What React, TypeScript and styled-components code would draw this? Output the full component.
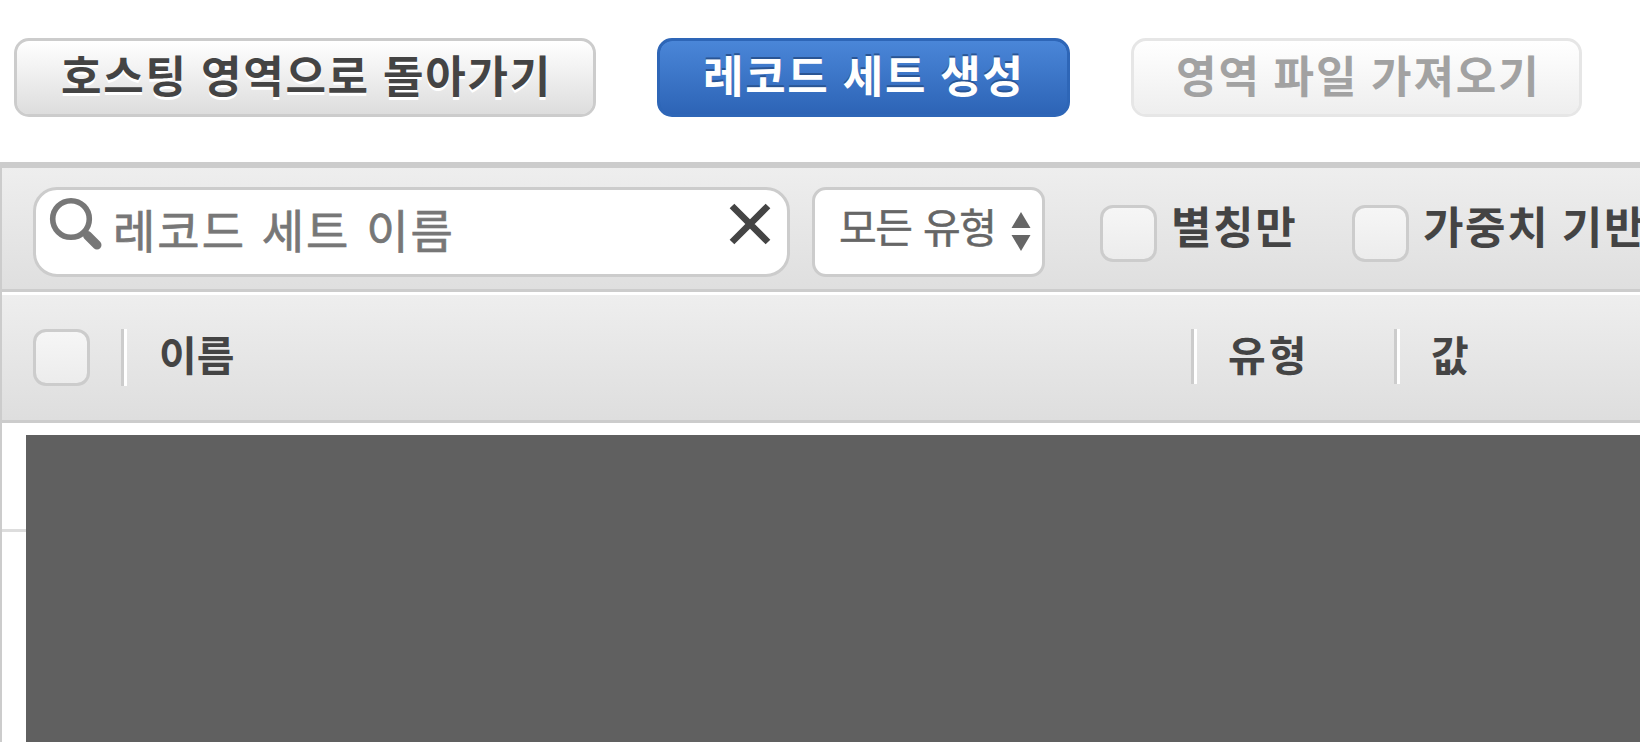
import React from 'react';
import styled, { createGlobalStyle, css } from 'styled-components';

const GlobalStyle = createGlobalStyle`
  * { box-sizing: border-box; }
  body {
    margin: 0;
    background: #fff;
    overflow: hidden;
    font-family: 'Noto Sans CJK KR', sans-serif;
  }
`;

const Page = styled.div`
  width: 1640px;
  height: 742px;
  display: flex;
  flex-direction: column;
  overflow: hidden;
`;

const Label = styled.span<{ $size: number; $spacing?: number; $gap?: number; $weight?: number }>`
  display: block;
  white-space: nowrap;
  line-height: 60px;
  font-size: ${p => p.$size}px;
  font-weight: ${p => p.$weight ?? 700};
  letter-spacing: ${p => p.$spacing ?? 0}px;
  word-spacing: ${p => p.$gap ?? 0}px;
`;

const Actions = styled.header`
  display: flex;
  flex: none;
  height: 162px;
  padding: 38px 0 0 14px;
`;

const variants = {
  plain: css`
    color: #444;
    border-color: #ccc;
    background: linear-gradient(#fff, #ddd) padding-box;
    text-shadow: 0 3px 0 #fff;
  `,
  primary: css`
    color: #fff;
    border-color: #2e66b7;
    background: linear-gradient(#4a86d8, #2d64b6) padding-box, #2e66b7;
    text-shadow: 0 -2px 0 #2a5594;
  `,
  disabled: css`
    color: #a2a2a2;
    border-color: #e6e6e6;
    background: linear-gradient(#fff, #eee) padding-box;
  `,
};

const Button = styled.button<{ $variant: keyof typeof variants; $width: number; $inset: number; $after: number }>`
  flex: none;
  width: ${p => p.$width}px;
  height: 79px;
  margin-right: ${p => p.$after}px;
  padding: 3px 0 0 ${p => p.$inset}px;
  display: flex;
  align-items: flex-start;
  font-family: inherit;
  border: 3px solid;
  border-radius: 15px;
  ${p => variants[p.$variant]}
`;

const Panel = styled.main`
  flex: 1;
  min-height: 0;
  display: flex;
  flex-direction: column;
  border-left: 2px solid #ccc;
  border-top: 6px solid #ccc;
`;

const FilterBar = styled.div`
  flex: none;
  display: flex;
  align-items: flex-start;
  height: 124px;
  padding: 19px 0 0 31px;
  background: linear-gradient(#eee, #dfdfdf);
  border-bottom: 3px solid #ccc;
`;

const Field = styled.div<{ $width: number; $radius: number; $inset: number }>`
  flex: none;
  display: flex;
  align-items: flex-start;
  width: ${p => p.$width}px;
  height: 90px;
  padding-left: ${p => p.$inset}px;
  background: #fff;
  border: 3px solid #ccc;
  border-radius: ${p => p.$radius}px;
`;

const SearchField = styled(Field)`
  margin-right: 22px;
  color: #777;
  & > span {
    flex: 1;
    padding-top: 8px;
    -webkit-text-stroke: 0.7px #777;
  }
`;

const TypeSelect = styled(Field)`
  margin-right: 55px;
  color: #666;
  & > span {
    width: 172px;
    padding-top: 5px;
    -webkit-text-stroke: 0.5px #666;
  }
`;

const SearchIcon = styled.svg`
  flex: none;
  width: 54px;
  height: 54px;
  margin: 6px 11px 0 0;
`;

const ClearIcon = styled.svg`
  flex: none;
  width: 44px;
  height: 44px;
  margin: 12px 15px 0 0;
`;

const ArrowsIcon = styled.svg`
  flex: none;
  width: 20px;
  height: 40px;
  margin-top: 21px;
`;

const Box = styled.span`
  flex: none;
  width: 57px;
  height: 57px;
  border: 3px solid #ccc;
  border-radius: 13px;
  background: linear-gradient(#f6f6f6, #ececec) padding-box;
`;

const Check = styled.label<{ $width: number }>`
  flex: none;
  display: flex;
  width: ${p => p.$width}px;
  padding-top: 18px;
  gap: 14px;
  color: #444;
  & > span:last-child { margin-top: -10px; }
`;

const TableHead = styled.div`
  flex: none;
  display: flex;
  height: 131px;
  padding: 34px 0 0 31px;
  color: #444;
  border-top: 3px solid #fff;
  border-bottom: 3px solid #ccc;
  background: linear-gradient(#eee, #dedede) padding-box;
`;

const Column = styled.div<{ $width: number; $inset: number; $rule?: number }>`
  flex: none;
  display: flex;
  width: ${p => p.$width}px;
  gap: ${p => p.$inset}px;
  &::before {
    content: '';
    flex: none;
    width: 6px;
    height: ${p => p.$rule ?? 55}px;
    background: linear-gradient(90deg, #ccc 50%, #fff 50%);
  }
  & > span { margin-top: -6px; }
`;

const HeadCheck = styled.div`
  flex: none;
  width: 88px;
`;

const HeadBox = styled(Box)`
  display: block;
`;

const Body = styled.div`
  flex: 1;
  min-height: 0;
  display: flex;
  padding-top: 12px;
`;

const Gutter = styled.div`
  width: 24px;
  height: 97px;
  border-bottom: 3px solid #ddd;
`;

const Mask = styled.div`
  flex: 1;
  background: #606060;
`;

export default function App() {
  return (
    <Page>
      <GlobalStyle />
      <Actions>
        <Button $variant="plain" $width={582} $inset={44} $after={61}>
          <Label $size={44} $spacing={1.75} $gap={1.5}>호스팅 영역으로 돌아가기</Label>
        </Button>
        <Button $variant="primary" $width={413} $inset={43} $after={61}>
          <Label $size={44} $spacing={1.7} $gap={1.5}>레코드 세트 생성</Label>
        </Button>
        <Button $variant="disabled" $width={451} $inset={42} $after={0} disabled>
          <Label $size={44} $spacing={2} $gap={0.5}>영역 파일 가져오기</Label>
        </Button>
      </Actions>
      <Panel>
        <FilterBar>
          <SearchField $width={757} $radius={24} $inset={12}>
            <SearchIcon viewBox="0 0 54 54" fill="none" stroke="#777">
              <circle cx="23" cy="23" r="18.3" strokeWidth="5.6" />
              <path d="M36 36l3 3" strokeWidth="5.5" />
              <path d="M39.5 39.5l9.5 9.5" strokeWidth="9" strokeLinecap="round" />
            </SearchIcon>
            <Label $size={46} $spacing={2} $gap={3.5} $weight={400}>레코드 세트 이름</Label>
            <ClearIcon viewBox="0 0 44 44" fill="none" stroke="#444" strokeWidth="6.6">
              <path d="M4 4l36 36M40 4l-36 36" />
            </ClearIcon>
          </SearchField>
          <TypeSelect $width={233} $radius={14} $inset={24}>
            <Label $size={41} $spacing={-1.4} $gap={3.5} $weight={400}>모든 유형</Label>
            <ArrowsIcon viewBox="0 0 20 40" fill="#666">
              <path d="M10 1l9.5 16H.5zM.5 24h19L10 40z" />
            </ArrowsIcon>
          </TypeSelect>
          <Check $width={252}>
            <Box />
            <Label $size={44} $spacing={1.6}>별칭만</Label>
          </Check>
          <Check $width={500}>
            <Box />
            <Label $size={44} $spacing={1.6} $gap={1}>가중치 기반</Label>
          </Check>
        </FilterBar>
        <TableHead>
          <HeadCheck><HeadBox /></HeadCheck>
          <Column $width={1070} $inset={32} $rule={57}>
            <Label $size={41}>이름</Label>
          </Column>
          <Column $width={203} $inset={31}>
            <Label $size={41} $spacing={3}>유형</Label>
          </Column>
          <Column $width={240} $inset={31}>
            <Label $size={41}>값</Label>
          </Column>
        </TableHead>
        <Body>
          <Gutter />
          <Mask />
        </Body>
      </Panel>
    </Page>
  );
}
